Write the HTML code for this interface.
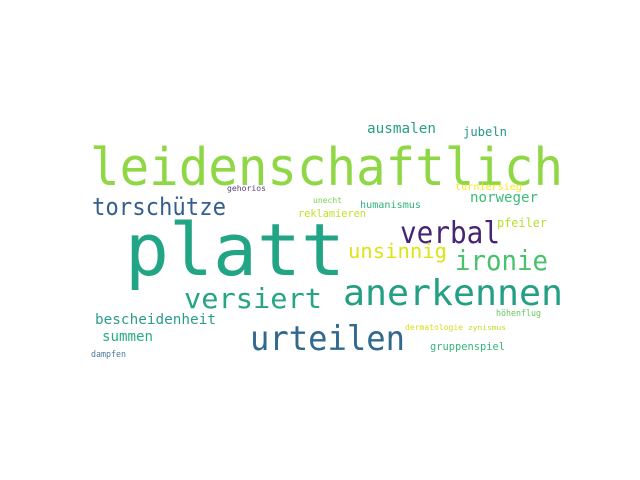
<!DOCTYPE html>
<html><head><meta charset="utf-8"><style>
html,body{margin:0;padding:0;background:#fff;width:640px;height:480px;overflow:hidden}
svg text{font-family:"DejaVu Sans Mono","Liberation Mono",monospace}
</style></head><body>
<svg width="640" height="480" xmlns="http://www.w3.org/2000/svg">
<rect width="640" height="480" fill="#fff"/>
<text x="90" y="185" font-size="52" fill="#8fd744" textLength="473" lengthAdjust="spacingAndGlyphs">leidenschaftlich</text>
<text x="125" y="275" font-size="72" fill="#21a585" textLength="220" lengthAdjust="spacingAndGlyphs">platt</text>
<text x="92" y="215" font-size="24" fill="#355f8d" textLength="134" lengthAdjust="spacingAndGlyphs">torschütze</text>
<text x="400" y="243" font-size="30" fill="#482475" textLength="100" lengthAdjust="spacingAndGlyphs">verbal</text>
<text x="348" y="258" font-size="20" fill="#dde318" textLength="99" lengthAdjust="spacingAndGlyphs">unsinnig</text>
<text x="455" y="270" font-size="28" fill="#4ac16d" textLength="93" lengthAdjust="spacingAndGlyphs">ironie</text>
<text x="343" y="305" font-size="36" fill="#23a083" textLength="220" lengthAdjust="spacingAndGlyphs">anerkennen</text>
<text x="184" y="308" font-size="28" fill="#25a584" textLength="138" lengthAdjust="spacingAndGlyphs">versiert</text>
<text x="250" y="350" font-size="34" fill="#31688e" textLength="155" lengthAdjust="spacingAndGlyphs">urteilen</text>
<text x="95" y="324" font-size="14" fill="#2a9d8a" textLength="121" lengthAdjust="spacingAndGlyphs">bescheidenheit</text>
<text x="102" y="341" font-size="14" fill="#28ae80" textLength="51" lengthAdjust="spacingAndGlyphs">summen</text>
<text x="91" y="357" font-size="9" fill="#4a7a9a" textLength="35" lengthAdjust="spacingAndGlyphs">dampfen</text>
<text x="367" y="133" font-size="14" fill="#26a084" textLength="69" lengthAdjust="spacingAndGlyphs">ausmalen</text>
<text x="463" y="136" font-size="12" fill="#22968b" textLength="44" lengthAdjust="spacingAndGlyphs">jubeln</text>
<text x="227" y="191" font-size="8" fill="#5a3f80" textLength="39" lengthAdjust="spacingAndGlyphs">gehorios</text>
<text x="455" y="190" font-size="10" fill="#fde725" textLength="67" lengthAdjust="spacingAndGlyphs">turniersieg</text>
<text x="313" y="203" font-size="8" fill="#7ad151" textLength="29" lengthAdjust="spacingAndGlyphs">unecht</text>
<text x="360" y="208" font-size="10" fill="#2fb47c" textLength="61" lengthAdjust="spacingAndGlyphs">humanismus</text>
<text x="470" y="202" font-size="14" fill="#3cbb75" textLength="68" lengthAdjust="spacingAndGlyphs">norweger</text>
<text x="298" y="217" font-size="11" fill="#c2df23" textLength="68" lengthAdjust="spacingAndGlyphs">reklamieren</text>
<text x="497" y="227" font-size="12" fill="#b5de2b" textLength="50" lengthAdjust="spacingAndGlyphs">pfeiler</text>
<text x="496" y="316" font-size="9" fill="#5ec962" textLength="45" lengthAdjust="spacingAndGlyphs">höhenflug</text>
<text x="405" y="330" font-size="8" fill="#d0e11c" textLength="58" lengthAdjust="spacingAndGlyphs">dermatologie</text>
<text x="468" y="330" font-size="7" fill="#bddf26" textLength="38" lengthAdjust="spacingAndGlyphs">zynismus</text>
<text x="430" y="350" font-size="11" fill="#35b779" textLength="75" lengthAdjust="spacingAndGlyphs">gruppenspiel</text>
</svg>
</body></html>
